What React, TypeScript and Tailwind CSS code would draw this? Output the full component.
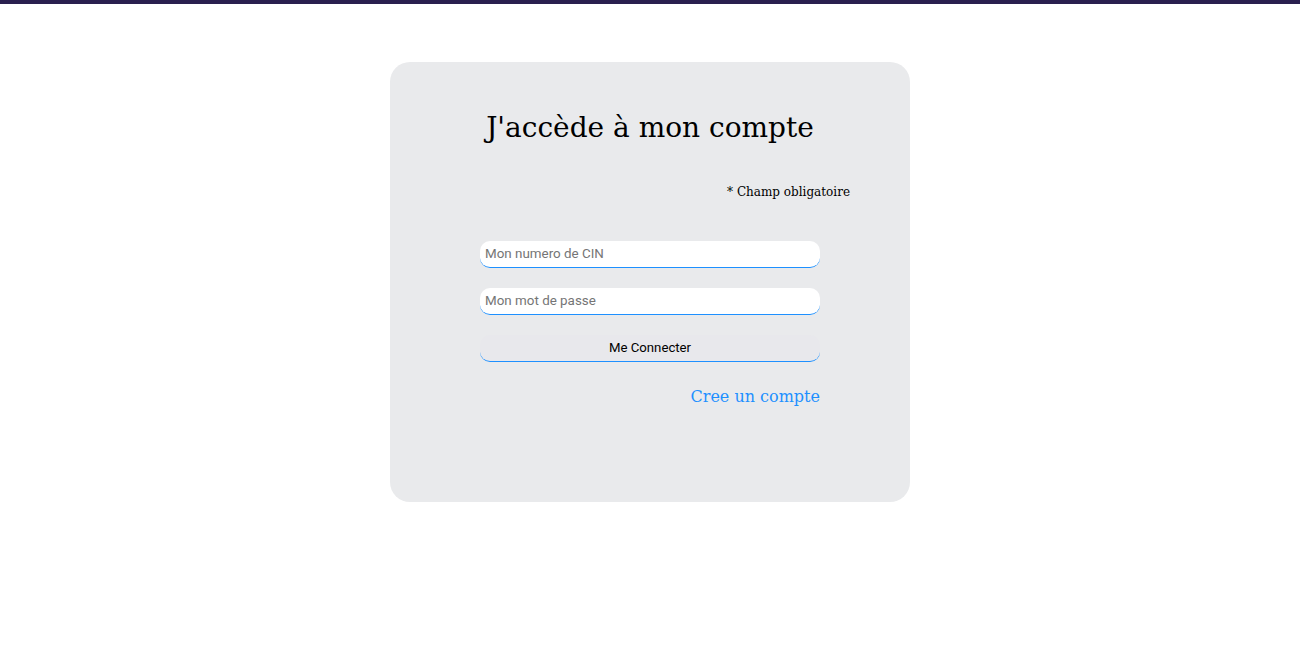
import React, { useState } from 'react';

export default function App() {
  const [cin, setCin] = useState('');
  const [password, setPassword] = useState('');

  return (
    <div className="min-h-[650px] bg-white">
      <div className="h-[4px] bg-[#2a1f4f]" />

      <div className="flex justify-center pt-[58px]">
        <div className="w-[520px] h-[440px] rounded-[20px] bg-[#e9eaec] px-[60px] pt-[48px] font-['DejaVu_Serif',serif]">
          <h1 className="text-center text-[28px] leading-[35px] text-black">
            J'accède à mon compte
          </h1>

          <p className="mt-[40px] text-right text-[12px] leading-[15px] text-black">
            * Champ obligatoire
          </p>

          <form
            className="mx-[30px] mt-[41px] flex flex-col gap-[20px] font-['Roboto',sans-serif]"
            onSubmit={(e) => e.preventDefault()}
          >
            <input
              type="text"
              value={cin}
              onChange={(e) => setCin(e.target.value)}
              placeholder="Mon numero de CIN"
              className="h-[27px] w-full rounded-[10px] border-b border-[#1e90ff] bg-white px-[5px] pb-[2px] text-[13.4px] text-black outline-none placeholder:text-[#757575]"
            />
            <input
              type="password"
              value={password}
              onChange={(e) => setPassword(e.target.value)}
              placeholder="Mon mot de passe"
              className="h-[27px] w-full rounded-[10px] border-b border-[#1e90ff] bg-white px-[5px] pb-[2px] text-[13.4px] text-black outline-none placeholder:text-[#757575]"
            />
            <button
              type="submit"
              className="h-[27px] w-full rounded-[10px] border-b border-[#1e90ff] bg-[#e8e8ec] text-[13.2px] text-black"
            >
              Me Connecter
            </button>
          </form>

          <div className="mx-[30px] mt-[23px] text-right">
            <a href="#" className="text-[16px] leading-[20px] text-[#1e90ff]">
              Cree un compte
            </a>
          </div>
        </div>
      </div>
    </div>
  );
}
